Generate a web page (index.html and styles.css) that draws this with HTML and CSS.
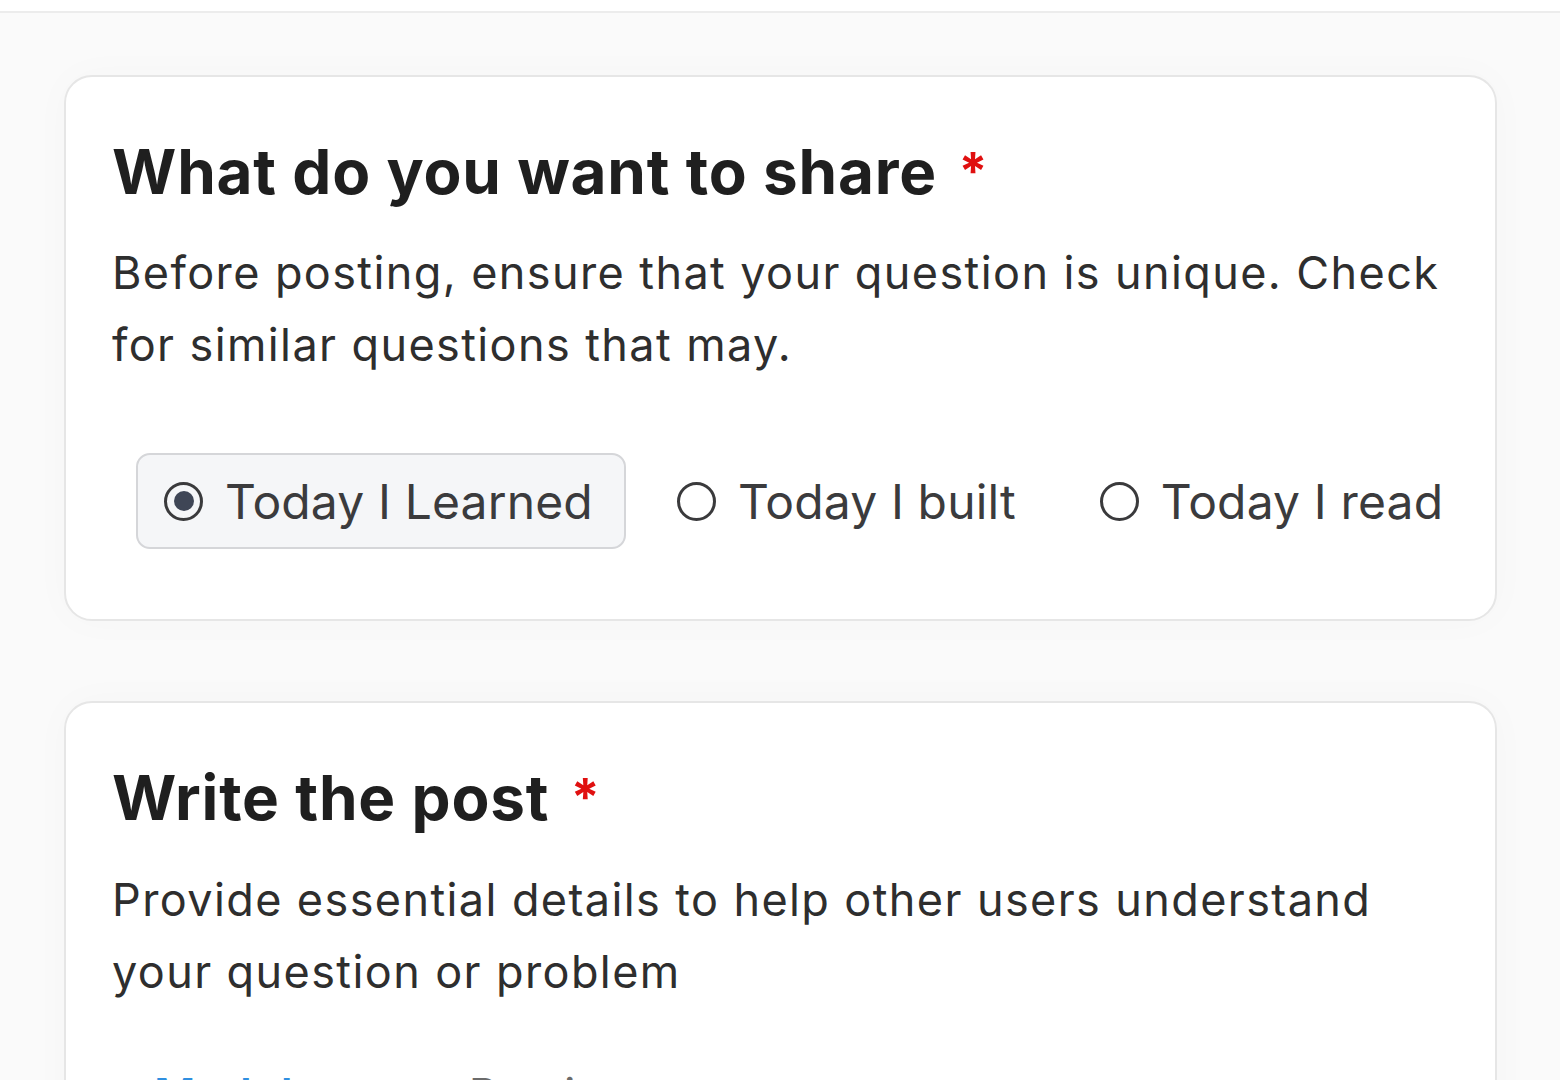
FILE: index.html
```html
<!DOCTYPE html>
<html lang="en">
<head>
<meta charset="utf-8">
<title>New post</title>
<link rel="stylesheet" href="styles.css">
</head>
<body>
<div class="topbar"></div>
<main class="page">
  <section class="card">
    <h2 class="card-title">What do you want to share <span class="req">*</span></h2>
    <p class="card-desc">Before posting, ensure that your question is unique. Check for similar questions that may.</p>
    <div class="options">
      <label class="option selected"><span class="radio"><span class="dot"></span></span><span class="opt-label">Today I Learned</span></label>
      <label class="option"><span class="radio"></span><span class="opt-label">Today I built</span></label>
      <label class="option"><span class="radio"></span><span class="opt-label">Today I read</span></label>
    </div>
  </section>
  <section class="card">
    <h2 class="card-title">Write the post <span class="req">*</span></h2>
    <p class="card-desc">Provide essential details to help other users understand your question or problem</p>
    <div class="tabs">
      <span class="tab active">Markdown</span>
      <span class="tab">Preview</span>
    </div>
  </section>
</main>
</body>
</html>
```
FILE: styles.css
```css
* { box-sizing: border-box; }
html, body { margin: 0; padding: 0; }
body {
  font-family: Inter, "Noto Sans", "Liberation Sans", sans-serif;
  background: #fafafa;
  color: #1f1f1f;
  height: 1080px;
  overflow: hidden;
}
.topbar {
  height: 13px;
  background: #ffffff;
  border-bottom: 2px solid #ececec;
}
.page {
  padding: 62px 63px 0 64px;
  display: flex;
  flex-direction: column;
  gap: 80px;
}
.card {
  background: #ffffff;
  border: 2px solid #e6e6e6;
  border-radius: 28px;
  padding: 58px 46px 70px 46px;
  box-shadow: 0 0 40px rgba(0, 0, 0, 0.025);
}
.card-title {
  margin: 0;
  font-size: 62px;
  line-height: 1.2;
  font-weight: 700;
  color: #1f1f1f;
  letter-spacing: 0.8px;
}
.req {
  color: #e01010;
  font-size: 52px;
  vertical-align: 4px;
  margin-left: 6px;
}
.card-desc {
  margin: 28px 0 0 0;
  font-size: 45px;
  line-height: 72px;
  color: #2e2e2e;
  letter-spacing: 1.4px;
}
.options {
  display: flex;
  gap: 23px;
  margin-top: 72px;
  padding-left: 24px;
}
.option {
  display: flex;
  align-items: center;
  gap: 22px;
  height: 96px;
  padding: 0 31px 0 26px;
  border: 2px solid transparent;
  border-radius: 14px;
  font-size: 48px;
  color: #3b3b3d;
  white-space: nowrap;
  letter-spacing: 0.15px;
}
.option.selected {
  background: #f5f6f8;
  border-color: #d5d6d9;
}
.radio {
  width: 39px;
  height: 39px;
  border: 3px solid #3a3a3c;
  border-radius: 50%;
  display: flex;
  align-items: center;
  justify-content: center;
  flex: none;
}
.dot {
  width: 20px;
  height: 20px;
  border-radius: 50%;
  background: #3f4656;
}
.tabs {
  display: flex;
  gap: 84px;
  margin-top: 57px;
  padding-left: 42px;
  font-size: 45px;
  line-height: 60px;
}
.tab { color: #6b6b6b; }
.tab.active { color: #2f8fe0; font-weight: 600; }
```
